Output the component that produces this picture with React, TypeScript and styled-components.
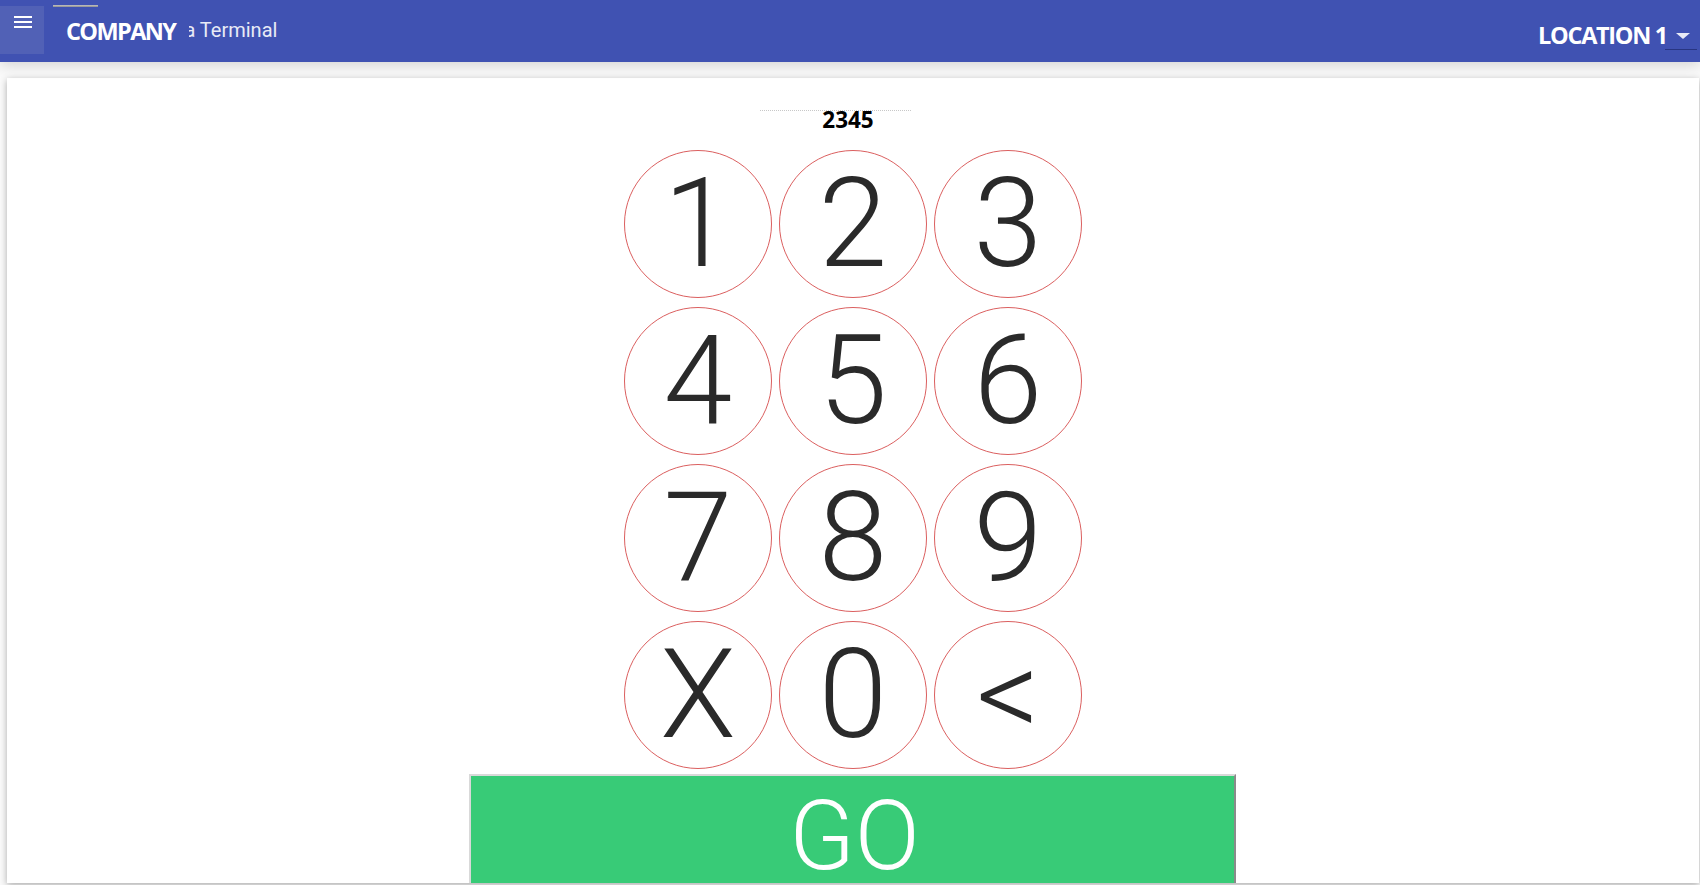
import React from "react";
import styled, { createGlobalStyle } from "styled-components";

const GlobalStyle = createGlobalStyle`
  html, body {
    margin: 0;
    padding: 0;
    background: #fafafa;
    overflow: hidden;
  }
  * { box-sizing: border-box; }
`;

const Page = styled.div`
  width: 100vw;
  height: 100vh;
  display: flex;
  flex-direction: column;
  font-family: "Open Sans", "Liberation Sans", sans-serif;
`;

const Header = styled.header`
  position: relative;
  z-index: 2;
  height: 62px;
  flex: 0 0 62px;
  background: #4052b2;
  display: flex;
  align-items: flex-start;
  box-shadow: 0 3px 14px rgba(0, 0, 0, 0.16);
`;

const MenuButton = styled.button`
  margin-top: 6px;
  width: 44px;
  height: 48px;
  border: none;
  padding: 10px 0 0 14px;
  background: #5161b6;
  display: flex;
  flex-direction: column;
  gap: 3px;
  cursor: pointer;
`;

const MenuLine = styled.span`
  display: block;
  width: 18px;
  height: 2px;
  background: #ffffff;
`;

const LoadBar = styled.div`
  position: absolute;
  left: 53px;
  top: 5px;
  width: 45px;
  height: 2px;
  background: linear-gradient(#c4c4c4, #8e8e8e);
`;

const Brand = styled.div`
  margin: 16px 0 0 22px;
  font-size: 23.5px;
  line-height: 30px;
  font-weight: 700;
  color: #ffffff;
  letter-spacing: -1.6px;
`;

const SubtitleClip = styled.div`
  margin: 18px 0 0 14px;
  width: 88px;
  overflow: hidden;
  display: flex;
  justify-content: flex-end;
  white-space: nowrap;
  font-family: Roboto, "Liberation Sans", sans-serif;
  font-size: 20px;
  line-height: 24px;
  color: #e8eaf6;
`;

const Spacer = styled.div`
  flex: 1;
`;

const Location = styled.div`
  margin-top: 20px;
  font-size: 23.5px;
  line-height: 30px;
  font-weight: 700;
  color: #ffffff;
  letter-spacing: -1.3px;
`;

const SelectBox = styled.div`
  margin: 20px 3px 0 -2px;
  width: 32px;
  height: 30px;
  border-bottom: 1px solid rgba(20, 30, 90, 0.55);
  display: flex;
  justify-content: center;
  padding: 13px 0 0 4px;
`;

const Caret = styled.span`
  width: 0;
  height: 0;
  border-left: 7px solid transparent;
  border-right: 7px solid transparent;
  border-top: 6px solid #e8eaf6;
`;

const Card = styled.main`
  margin: 16px 1px 0 7px;
  height: 805px;
  background: #ffffff;
  box-shadow: 0 2px 7px rgba(0, 0, 0, 0.32);
  overflow: hidden;
  display: flex;
  flex-direction: column;
  align-items: center;
`;

const PinField = styled.div`
  margin-top: 32px;
  width: 186px;
  display: flex;
  flex-direction: column;
`;

const DottedRule = styled.div`
  width: 151px;
  border-top: 1px dotted #c8c8c8;
`;

const PinValue = styled.div`
  margin-top: 1px;
  padding-right: 10px;
  text-align: center;
  font-size: 22.5px;
  line-height: 16px;
  font-weight: 700;
  color: #000000;
`;

const Keypad = styled.div`
  margin-top: 22px;
  display: grid;
  grid-template-columns: repeat(3, 148px);
  grid-auto-rows: 148px;
  column-gap: 7px;
  row-gap: 9px;
`;

const Key = styled.button`
  width: 148px;
  height: 148px;
  border-radius: 50%;
  border: 1px solid #db5f5f;
  background: #ffffff;
  padding: 0;
  display: flex;
  align-items: center;
  justify-content: center;
  font-family: Roboto, "Liberation Sans", sans-serif;
  font-weight: 300;
  font-size: 124px;
  line-height: 146px;
  color: #2a2a2a;
  cursor: pointer;
`;

const GoButton = styled.button`
  margin-top: 5px;
  width: 767px;
  flex: 0 0 140px;
  margin-left: -1px;
  background: #38cb77;
  border-style: solid;
  border-width: 2px;
  border-color: #d9d9d9 #8a8a8a #8a8a8a #d9d9d9;
  padding: 0 0 0 4px;
  font-family: Roboto, "Liberation Sans", sans-serif;
  font-weight: 300;
  font-size: 96px;
  line-height: 120px;
  color: #ffffff;
  display: flex;
  justify-content: center;
  align-items: flex-start;
  cursor: pointer;
`;

const keys = ["1", "2", "3", "4", "5", "6", "7", "8", "9", "X", "0", "<"];

export default function App() {
  return (
    <Page>
      <GlobalStyle />
      <Header>
        <LoadBar />
        <MenuButton aria-label="menu">
          <MenuLine />
          <MenuLine />
          <MenuLine />
        </MenuButton>
        <Brand>COMPANY</Brand>
        <SubtitleClip>
          <span>Pizza Terminal</span>
        </SubtitleClip>
        <Spacer />
        <Location>LOCATION 1</Location>
        <SelectBox>
          <Caret />
        </SelectBox>
      </Header>
      <Card>
        <PinField>
          <DottedRule />
          <PinValue>2345</PinValue>
        </PinField>
        <Keypad>
          {keys.map((k) => (
            <Key key={k}>{k}</Key>
          ))}
        </Keypad>
        <GoButton>GO</GoButton>
      </Card>
    </Page>
  );
}
